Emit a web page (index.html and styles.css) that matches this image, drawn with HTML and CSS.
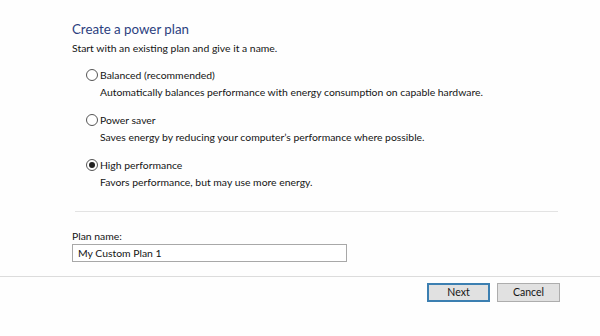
FILE: index.html
```html
<!DOCTYPE html>
<html>
<head>
<meta charset="utf-8">
<link rel="stylesheet" href="styles.css">
</head>
<body>
<div class="content">
  <h1 class="title">Create a power plan</h1>
  <p class="subtitle">Start with an existing plan and give it a name.</p>
  <div class="options">
    <div class="option">
      <div class="option-row"><span class="radio"></span><span class="label">Balanced (recommended)</span></div>
      <div class="desc">Automatically balances performance with energy consumption on capable hardware.</div>
    </div>
    <div class="option">
      <div class="option-row"><span class="radio"></span><span class="label">Power saver</span></div>
      <div class="desc">Saves energy by reducing your computer’s performance where possible.</div>
    </div>
    <div class="option">
      <div class="option-row"><span class="radio checked"></span><span class="label">High performance</span></div>
      <div class="desc">Favors performance, but may use more energy.</div>
    </div>
  </div>
  <div class="separator"></div>
  <div class="field">
    <label class="field-label">Plan name:</label>
    <div class="input">My Custom Plan 1</div>
  </div>
</div>
<div class="footer">
  <div class="buttons">
    <button class="btn primary">Next</button>
    <button class="btn">Cancel</button>
  </div>
</div>
</body>
</html>
```
FILE: styles.css
```css
html, body {
  margin: 0;
  padding: 0;
  background: #fefefe;
  font-family: "Lato", "Noto Sans", sans-serif;
  font-size: 10.4px;
  color: #141414;
}
.content {
  padding: 18px 0 0 72px;
  width: 486px;
}
.title {
  margin: 0;
  font-weight: normal;
  font-size: 13.3px;
  line-height: 22px;
  color: #2c3f7e;
}
.subtitle {
  margin: 0;
  line-height: 16px;
}
.options {
  margin-top: 11px;
  padding-left: 14px;
  display: flex;
  flex-direction: column;
  gap: 12px;
}
.option-row {
  display: flex;
  align-items: center;
  height: 16px;
  white-space: nowrap;
}
.radio {
  width: 10px;
  height: 10px;
  border: 1px solid #555;
  border-radius: 50%;
  box-sizing: content-box;
  margin-right: 2px;
  background: #fff;
  display: flex;
  align-items: center;
  justify-content: center;
}
.radio.checked::after {
  content: "";
  width: 6px;
  height: 6px;
  border-radius: 50%;
  background: #222;
}
.desc {
  margin-top: 1px;
  padding-left: 14px;
  line-height: 16px;
  white-space: nowrap;
}
.separator {
  margin: 21px 0 0 3px;
  height: 1px;
  background: #e3e3e3;
}
.field {
  margin-top: 17px;
}
.field-label {
  display: block;
  line-height: 15px;
}
.input {
  width: 268px;
  height: 16px;
  border: 1px solid #a8a8a8;
  padding-left: 5px;
  line-height: 16px;
  background: #fff;
}
.footer {
  margin-top: 14px;
  border-top: 1px solid #dcdcdc;
  padding-top: 6px;
}
.buttons {
  display: flex;
  justify-content: flex-end;
  gap: 7px;
  padding-right: 40px;
}
.btn {
  width: 63px;
  height: 19px;
  font: inherit;
  font-size: 10.5px;
  line-height: 15px;
  color: #141414;
  background: #e1e1e1;
  border: 1px solid #adadad;
  padding: 0;
}
.btn.primary {
  border: 2px solid #3c7fb1;
}
```
